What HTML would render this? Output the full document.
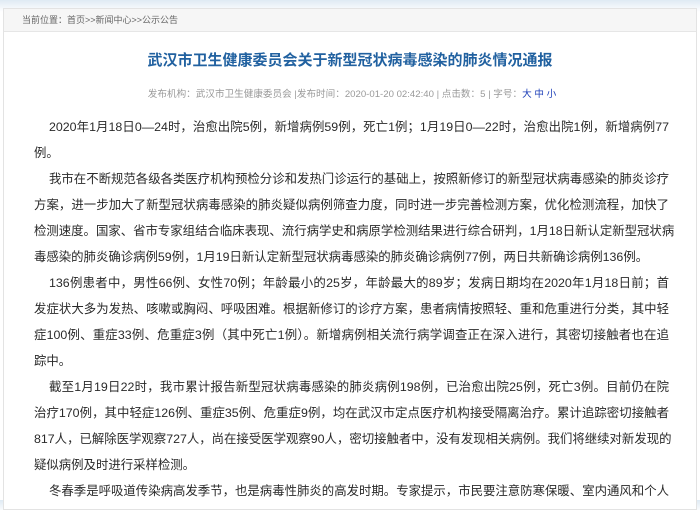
<!DOCTYPE html>
<html><head><meta charset="utf-8"><style>
body{margin:0;width:700px;height:500px;overflow:hidden;background:linear-gradient(#dfeaf3,#fff 12px);font-family:"Liberation Sans","Noto Sans CJK SC",sans-serif;position:relative}
.box{position:absolute;left:3px;top:8px;width:692px;height:500px;border:1px solid #e3e3e3;background:#fff}
.bc{height:22px;background:#f6f6f6;border-bottom:1px solid #e6e6e6;font-size:9px;color:#666;line-height:22px;padding-left:18px}
.t{position:absolute;top:40px;left:0;width:100%;text-align:center;font-size:15px;font-weight:bold;color:#2161a0}
.m{position:absolute;top:77px;left:0;width:100%;text-align:center;font-size:9.6px;color:#999;padding-left:2px}
.m b{color:#1d3fb8;font-weight:normal}
.c{position:absolute;top:105px;left:30px;width:635px;font-size:12.4px;color:#2a2a2a;line-height:26px}
.c div{text-align:justify;text-align-last:justify;white-space:nowrap}
.c div.i{padding-left:15px}
.c div.e{text-align-last:left}
</style></head><body>
<div class="box">
<div class="bc">当前位置：首页&gt;&gt;新闻中心&gt;&gt;公示公告</div>
<div class="t">武汉市卫生健康委员会关于新型冠状病毒感染的肺炎情况通报</div>
<div class="m">发布机构：武汉市卫生健康委员会 |发布时间：2020-01-20 02:42:40 | 点击数：5 | 字号：<b>大 中 小</b></div>
<div class="c">
<div class="i">2020年1月18日0—24时，治愈出院5例，新增病例59例，死亡1例；1月19日0—22时，治愈出院1例，新增病例77</div>
<div class="e">例。</div>
<div class="i">我市在不断规范各级各类医疗机构预检分诊和发热门诊运行的基础上，按照新修订的新型冠状病毒感染的肺炎诊疗</div>
<div>方案，进一步加大了新型冠状病毒感染的肺炎疑似病例筛查力度，同时进一步完善检测方案，优化检测流程，加快了</div>
<div>检测速度。国家、省市专家组结合临床表现、流行病学史和病原学检测结果进行综合研判，1月18日新认定新型冠状病</div>
<div class="e">毒感染的肺炎确诊病例59例，1月19日新认定新型冠状病毒感染的肺炎确诊病例77例，两日共新确诊病例136例。</div>
<div class="i">136例患者中，男性66例、女性70例；年龄最小的25岁，年龄最大的89岁；发病日期均在2020年1月18日前；首</div>
<div>发症状大多为发热、咳嗽或胸闷、呼吸困难。根据新修订的诊疗方案，患者病情按照轻、重和危重进行分类，其中轻</div>
<div>症100例、重症33例、危重症3例（其中死亡1例）。新增病例相关流行病学调查正在深入进行，其密切接触者也在追</div>
<div class="e">踪中。</div>
<div class="i">截至1月19日22时，我市累计报告新型冠状病毒感染的肺炎病例198例，已治愈出院25例，死亡3例。目前仍在院</div>
<div>治疗170例，其中轻症126例、重症35例、危重症9例，均在武汉市定点医疗机构接受隔离治疗。累计追踪密切接触者</div>
<div>817人，已解除医学观察727人，尚在接受医学观察90人，密切接触者中，没有发现相关病例。我们将继续对新发现的</div>
<div class="e">疑似病例及时进行采样检测。</div>
<div class="i">冬春季是呼吸道传染病高发季节，也是病毒性肺炎的高发时期。专家提示，市民要注意防寒保暖、室内通风和个人</div>
</div>
</div>
</body></html>
